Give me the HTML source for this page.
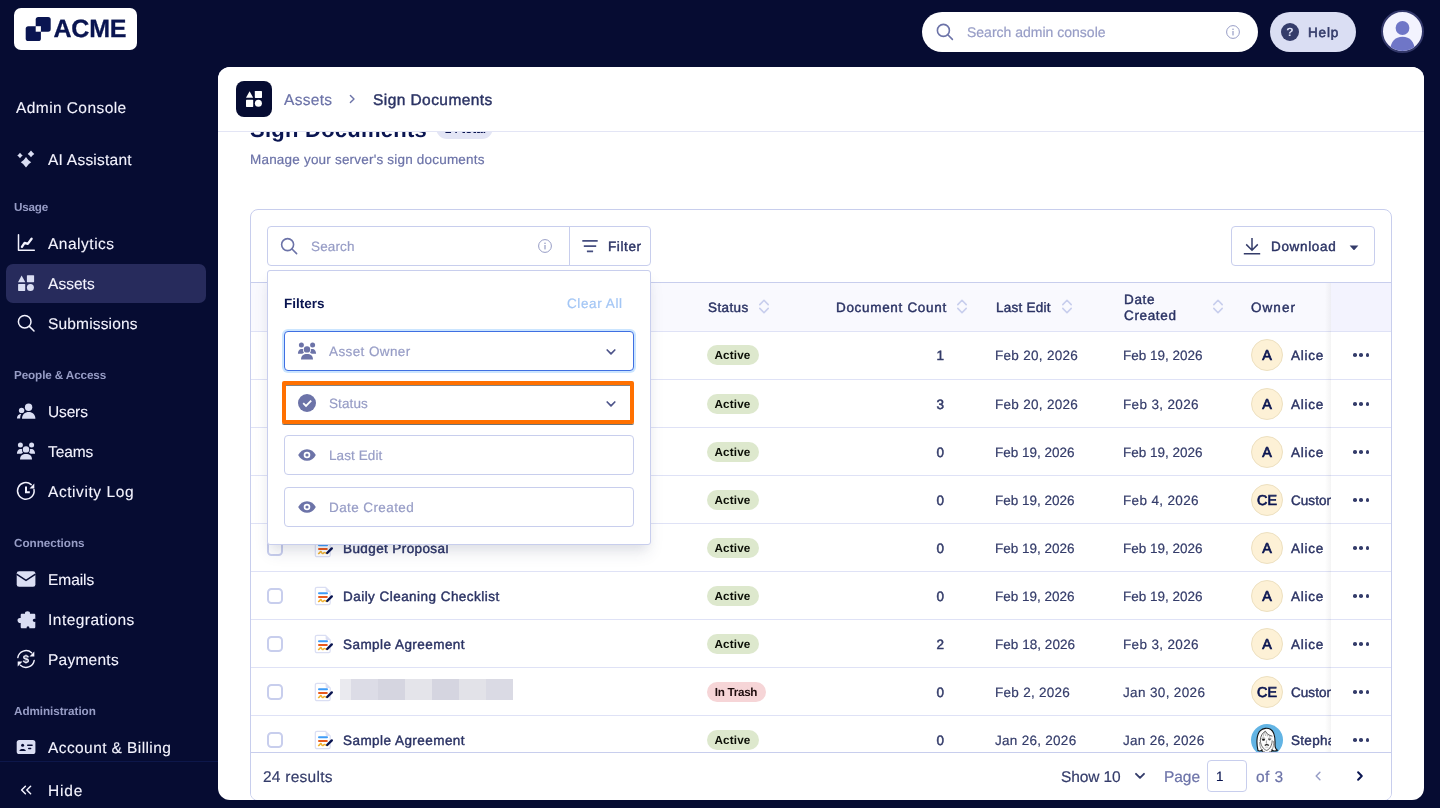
<!DOCTYPE html>
<html lang="en">
<head>
<meta charset="utf-8">
<title>Sign Documents - Admin Console</title>
<style>
*{box-sizing:border-box;margin:0;padding:0}
html,body{width:1440px;height:808px;overflow:hidden;background:#060c32}
body{font-family:"Liberation Sans",Arial,sans-serif;font-size:13.5px;color:#343c6a;position:relative;-webkit-font-smoothing:antialiased;text-rendering:geometricPrecision;-webkit-text-stroke:0.2px}
#root{position:absolute;left:0;top:0;width:1440px;height:808px;will-change:transform}
.abs{position:absolute}
.t{position:absolute;white-space:nowrap;line-height:20px}
b,.b{-webkit-text-stroke:0}
svg{display:block;position:absolute;overflow:visible}
/* sidebar */
#side{position:absolute;left:0;top:0;width:218px;height:808px}
.logo{position:absolute;left:14px;top:8px;width:123px;height:42px;background:#fff;border-radius:7px}
.nav{position:absolute;left:48px;font-size:15.5px;-webkit-text-stroke:0.1px;line-height:20px;color:#f3f3fe;white-space:nowrap}
.sec{position:absolute;left:14px;font-size:11.7px;line-height:16px;font-weight:700;-webkit-text-stroke:0;color:#979dc6;white-space:nowrap}
.ico{left:16px;width:20px;height:20px;fill:#dadef3}
.active{position:absolute;left:6px;top:264px;width:200px;height:39px;border-radius:7px;background:#272b5c}
/* header */
.hsearch{position:absolute;left:922px;top:12px;width:336px;height:40px;border-radius:20px;background:#fff}
.help{position:absolute;left:1270px;top:12px;width:86px;height:40px;border-radius:20px;background:#dadef3}
.avatar{position:absolute;left:1380.5px;top:10.3px;width:43px;height:43px;border-radius:50%;background:#f3f3fe;border:2px solid #33386a;overflow:hidden}
/* main */
#main{position:absolute;left:218px;top:67px;width:1206px;height:733px;background:#fff;border-radius:12px;overflow:hidden}
#main .in{position:absolute;left:-218px;top:-67px;width:1440px;height:808px}
.crumb{position:absolute;left:218px;top:67px;width:1206px;height:65px;background:#fff;border-bottom:1px solid #e3e5f5}
.card{position:absolute;left:250px;top:209px;width:1142px;height:592px;border:1px solid #c8ceed;border-radius:8px;background:#fff}
.box{position:absolute;border:1px solid #c8ceed;background:#fff}
.hl{position:absolute;left:251px;width:1140px;height:1px;background:#dfe2f6}
.cb{position:absolute;left:267px;width:16px;height:16px;border:2px solid #c8ceed;border-radius:4.5px;background:#fff}
.badge{position:absolute;left:707px;height:20px;border-radius:10px;background:#dde8cd;color:#0b0e06;font-size:11.7px;letter-spacing:0.15px;padding-right:1px;font-weight:700;-webkit-text-stroke:0;line-height:21px;text-align:center;white-space:nowrap}
.num{position:absolute;width:40px;left:904px;text-align:right;line-height:20px;font-size:13.5px;color:#343c6a;-webkit-text-stroke:0.5px #343c6a}
.own{position:absolute;left:1251px;width:32px;height:32px;border-radius:50%;background:#fdf1d6;border:1px solid #ede0c0;color:#0a1551;font-weight:400;-webkit-text-stroke:0.7px #0a1551;font-size:14.3px;line-height:33px;text-align:center;letter-spacing:0px}
.dots{position:absolute;left:1353px;width:17px;height:4px}
.dots i{position:absolute;top:0.2px;width:3.6px;height:3.6px;border-radius:50%;background:#343c6a}
.fld{position:absolute;left:284px;width:350px;height:40px;border:1px solid #c8ceed;border-radius:4px;background:#fff}
.ph{color:#979dc6}
.nm{font-weight:400;color:#2b3364;-webkit-text-stroke:0.42px #2b3364;letter-spacing:0.2px}
.dt{color:#343c6a}
.actsh{background:linear-gradient(to right,rgba(30,30,40,0),rgba(30,30,40,0.05))}
</style>
</head>
<body>
<div id="root">
<div id="side">
  <div class="logo">
    <svg style="left:0;top:0" width="123" height="42" viewBox="0 0 123 42">
      <rect x="21.7" y="8.9" width="15" height="14.8" rx="2.6" fill="#0a1551"/>
      <rect x="11.7" y="18.2" width="15.2" height="14.8" rx="2.6" fill="#0a1551"/>
      <rect x="21.7" y="18.2" width="5.2" height="5.5" fill="#fff"/>
    </svg>
    <div class="t" style="left:39.5px;top:7px;font-size:25px;line-height:28px;font-weight:700;-webkit-text-stroke:0.3px #0a1551;color:#0a1551;letter-spacing:-0.2px">ACME</div>
  </div>
  <div class="nav" style="left:16px;top:99px;letter-spacing:0.42px">Admin Console</div>

  <svg class="ico" style="top:149px" viewBox="0 0 20 20"><path d="M10.00 8.00 Q11.87 11.33 15.20 13.20 Q11.87 15.07 10.00 18.40 Q8.13 15.07 4.80 13.20 Q8.13 11.33 10.00 8.00Z"/><path d="M15.00 1.60 Q16.32 3.58 18.30 4.90 Q16.32 6.22 15.00 8.20 Q13.68 6.22 11.70 4.90 Q13.68 3.58 15.00 1.60Z"/><path d="M4.00 3.80 Q5.08 5.42 6.70 6.50 Q5.08 7.58 4.00 9.20 Q2.92 7.58 1.30 6.50 Q2.92 5.42 4.00 3.80Z"/></svg>
  <div class="nav" style="top:151px;letter-spacing:0.24px">AI Assistant</div>

  <div class="sec" style="top:200px;letter-spacing:-0.20px">Usage</div>

  <svg class="ico" style="top:233px" viewBox="0 0 20 20"><path d="M2.5 1.8V17.3H18.3" fill="none" stroke="#f3f3fe" stroke-width="1.5" stroke-linecap="round" stroke-linejoin="round"/><path d="M5.9 13.9 L8.6 9.8 L11.8 10.9 L15.6 5.7" fill="none" stroke="#f3f3fe" stroke-width="2.3" stroke-linecap="round" stroke-linejoin="round"/></svg>
  <div class="nav" style="top:235px;letter-spacing:0.51px">Analytics</div>

  <div class="active"></div>
  <svg class="ico" style="top:273px" viewBox="0 0 20 20"><path d="M5.65 2.4 L9.3 9.2 H2 Z"/><rect x="10.9" y="2.2" width="7.2" height="7" rx="0.6"/><rect x="2.1" y="10.9" width="7.1" height="7" rx="0.6"/><circle cx="14.4" cy="14.4" r="3.5"/></svg>
  <div class="nav" style="top:275px;letter-spacing:0.04px">Assets</div>

  <svg class="ico" style="top:313px" viewBox="0 0 20 20"><circle cx="8.7" cy="8.7" r="6.3" fill="none" stroke="#f3f3fe" stroke-width="1.5"/><path d="M13.4 13.4 L18 18" fill="none" stroke="#f3f3fe" stroke-width="1.5" stroke-linecap="round"/></svg>
  <div class="nav" style="top:315px;letter-spacing:0.17px">Submissions</div>

  <div class="sec" style="top:368px;letter-spacing:-0.11px">People &amp; Access</div>

  <svg class="ico" style="top:401px" viewBox="0 0 20 20"><circle cx="12.6" cy="6.3" r="3.7"/><path d="M6 17.8 C6 13.4 9 10.9 12.7 10.9 C16.4 10.9 19.4 13.4 19.4 17.8 Z"/><circle cx="5.6" cy="9.4" r="2.7"/><path d="M0.9 17.6 C0.9 15 2.6 13 5.4 12.7 C4.4 14 4.2 15.6 4.2 17.6 Z"/></svg>
  <div class="nav" style="top:403px;letter-spacing:-0.15px">Users</div>

  <svg class="ico" style="top:441px" viewBox="0 0 20 20"><circle cx="10" cy="8.4" r="3.2"/><path d="M4 18.4 C4 14.6 6.5 12.9 10 12.9 C13.5 12.9 16 14.6 16 18.4Z"/><circle cx="4.4" cy="3.9" r="2.5"/><circle cx="15.6" cy="3.9" r="2.5"/><path d="M0.9 12.7 C0.9 10 2.2 7.9 4.6 7.9 C5.2 7.9 5.7 8 6.1 8.3 C5.9 9.6 6.2 10.8 7 11.7 C6.3 12 5.7 12.3 5.2 12.7Z"/><path d="M19.1 12.7 C19.1 10 17.8 7.9 15.4 7.9 C14.8 7.9 14.3 8 13.9 8.3 C14.1 9.6 13.8 10.8 13 11.7 C13.7 12 14.3 12.3 14.8 12.7Z"/></svg>
  <div class="nav" style="top:443px;letter-spacing:-0.08px">Teams</div>

  <svg class="ico" style="top:481px" viewBox="0 0 20 20"><path d="M18 8.6 A8.3 8.3 0 1 1 15.2 3.6" fill="none" stroke="#f3f3fe" stroke-width="1.5" stroke-linecap="round"/><path d="M18.3 2.6 V7.4 H13.5 Z" fill="#f3f3fe"/><path d="M10 5.6 V11.2 H13.8" fill="none" stroke="#f3f3fe" stroke-width="2" stroke-linejoin="miter"/></svg>
  <div class="nav" style="top:483px;letter-spacing:0.57px">Activity Log</div>

  <div class="sec" style="top:536px;letter-spacing:-0.02px">Connections</div>

  <svg class="ico" style="top:569px" viewBox="0 0 20 20"><rect x="0.7" y="2.2" width="18.7" height="15.6" rx="2.4"/><path d="M0.5 5.2 L10 11.4 L19.5 5.2" fill="none" stroke="#060c32" stroke-width="1.5"/></svg>
  <div class="nav" style="top:571px;letter-spacing:-0.06px">Emails</div>

  <svg class="ico" style="top:609px" viewBox="0 0 20 20"><path d="M9 4.7 C8.4 1.5 14.6 1.5 14 4.7 H18 C18.8 4.7 19.3 5.2 19.3 6 V10 C16 9 16 13.8 19.3 12.8 V18 C19.3 18.8 18.8 19.3 18 19.3 H13.3 C14 16.6 10 16.6 10.7 19.3 H6 C5.2 19.3 4.7 18.8 4.7 18 V14 C1.2 14.8 -0.2 8.4 4.7 9 V6 C4.7 5.2 5.2 4.7 6 4.7 Z"/></svg>
  <div class="nav" style="top:611px;letter-spacing:0.48px">Integrations</div>

  <svg class="ico" style="top:649px" viewBox="0 0 20 20"><path d="M1.8 8.6 A8.3 8.3 0 0 1 15.6 3.8" fill="none" stroke="#f3f3fe" stroke-width="1.4" stroke-linecap="round"/><path d="M18.3 2.6 V7.4 H13.5 Z" fill="#f3f3fe"/><path d="M18.2 11.4 A8.3 8.3 0 0 1 4.4 16.2" fill="none" stroke="#f3f3fe" stroke-width="1.4" stroke-linecap="round"/><path d="M1.7 17.4 V12.6 H6.5 Z" fill="#f3f3fe"/><text x="10" y="14.2" text-anchor="middle" font-family="Liberation Sans, sans-serif" font-weight="700" font-size="11.5" fill="#f3f3fe">$</text></svg>
  <div class="nav" style="top:651px;letter-spacing:0.25px">Payments</div>

  <div class="sec" style="top:704px;letter-spacing:-0.05px">Administration</div>

  <svg class="ico" style="top:737px" viewBox="0 0 20 20"><rect x="0.7" y="2.9" width="18.7" height="14.2" rx="2.6"/><circle cx="6.6" cy="8.2" r="1.5" fill="#060c32"/><path d="M3.4 14 C3.6 11.4 9.6 11.4 9.8 14Z" fill="#060c32"/><rect x="11" y="7.6" width="5.8" height="1.4" rx="0.7" fill="#060c32"/><rect x="12" y="10.8" width="3.4" height="1.4" rx="0.7" fill="#060c32"/></svg>
  <div class="nav" style="top:739px;letter-spacing:0.41px">Account &amp; Billing</div>

  <div class="abs" style="left:0;top:761px;width:218px;height:1px;background:#0d174a"></div>
  <div class="abs" style="left:0;top:762px;width:218px;height:46px;background:#060c32"></div>
  <svg class="ico" style="top:780px" viewBox="0 0 20 20"><path d="M9.4 6.2 L5.6 10 L9.4 13.8 M14.6 6.2 L10.8 10 L14.6 13.8" fill="none" stroke="#f3f3fe" stroke-width="1.5" stroke-linecap="round" stroke-linejoin="round"/></svg>
  <div class="nav" style="top:782px;letter-spacing:0.85px">Hide</div>
</div>
<div class="hsearch">
  <svg style="left:14px;top:11px" width="18" height="18" viewBox="0 0 18 18"><circle cx="7.4" cy="7.4" r="6" fill="none" stroke="#6c73a8" stroke-width="1.6"/><path d="M11.8 11.8 L16.4 16.4" stroke="#6c73a8" stroke-width="1.6" stroke-linecap="round"/></svg>
  <div class="t ph" style="left:45px;top:10px;font-size:14px;letter-spacing:0px">Search admin console</div>
  <svg style="left:304px;top:13px" width="14" height="14" viewBox="0 0 14 14"><circle cx="7" cy="7" r="6.4" fill="none" stroke="#979dc6" stroke-width="1"/><rect x="6.4" y="6" width="1.2" height="4.4" fill="#979dc6"/><circle cx="7" cy="4.2" r="0.8" fill="#979dc6"/></svg>
</div>
<div class="help">
  <svg style="left:11px;top:11px" width="18" height="18" viewBox="0 0 18 18"><circle cx="9" cy="9" r="9" fill="#343c6a"/><text x="9" y="13.2" text-anchor="middle" font-family="Liberation Sans, sans-serif" font-weight="700" font-size="12" fill="#dadef3">?</text></svg>
  <div class="t" style="left:38px;top:11px;font-size:13.5px;color:#343c6a;-webkit-text-stroke:0.6px #343c6a;letter-spacing:0.85px">Help</div>
</div>
<div class="avatar">
  <svg style="left:0;top:0" width="39" height="39" viewBox="0 0 39 39"><circle cx="19.5" cy="16" r="6.9" fill="#6f76c7"/><path d="M7.2 39 C7.2 30 12 24.8 19.5 24.8 C27 24.8 31.8 30 31.8 39Z" fill="#6f76c7"/></svg>
</div>
<div id="main"><div class="in">
  <!-- page heading (scrolled under the breadcrumb bar) -->
  <div class="t" style="left:250px;top:116px;font-size:22px;line-height:28px;font-weight:700;-webkit-text-stroke:0;color:#0a1551;letter-spacing:0.25px">Sign Documents</div>
  <div class="abs" style="left:436px;top:117px;width:57px;height:22px;border-radius:11px;background:#e3e5f5"></div>
  <div class="t" style="left:445px;top:122px;font-size:11.7px;line-height:16px;font-weight:700;-webkit-text-stroke:0;color:#0a1551;letter-spacing:0px">24 total</div>
  <div class="t" style="left:250px;top:150px;color:#6c73a8;letter-spacing:0.2px">Manage your server's sign documents</div>

  <div class="card"></div>
  <!-- toolbar -->
  <div class="box" style="left:267px;top:226px;width:304px;height:40px;border-radius:4px 0 0 4px"></div>
  <svg style="left:280px;top:237px" width="18" height="18" viewBox="0 0 18 18"><circle cx="7.6" cy="7.6" r="6" fill="none" stroke="#6c73a8" stroke-width="1.6"/><path d="M12 12 L16.6 16.6" stroke="#6c73a8" stroke-width="1.6" stroke-linecap="round"/></svg>
  <div class="t ph" style="left:311px;top:237px;letter-spacing:0.15px">Search</div>
  <svg style="left:538px;top:239px" width="14" height="14" viewBox="0 0 14 14"><circle cx="7" cy="7" r="6.4" fill="none" stroke="#979dc6" stroke-width="1"/><rect x="6.4" y="6" width="1.2" height="4.4" fill="#979dc6"/><circle cx="7" cy="4.2" r="0.8" fill="#979dc6"/></svg>
  <div class="box" style="left:569px;top:226px;width:82px;height:40px;border-radius:0 4px 4px 0"></div>
  <svg style="left:582px;top:239px" width="16" height="14" viewBox="0 0 16 14"><path d="M0.3 1.8 H15.7 M1.8 7.1 H14.2 M4.9 12.3 H11.1" stroke="#454e80" stroke-width="1.8" stroke-linecap="butt"/></svg>
  <div class="t nm" style="left:608px;top:237px;letter-spacing:0.62px">Filter</div>
  <div class="box" style="left:1231px;top:226px;width:144px;height:40px;border-radius:4px"></div>
  <svg style="left:1243px;top:237px" width="18" height="18" viewBox="0 0 18 18"><path d="M9 1 V12.6 M3.2 7.4 L9 13.2 L14.8 7.4 M0.8 16.8 H17.2" fill="none" stroke="#343c6a" stroke-width="1.5" stroke-linejoin="miter"/></svg>
  <div class="t nm" style="left:1271px;top:237px;letter-spacing:0.66px">Download</div>
  <svg style="left:1349px;top:245px" width="10" height="6" viewBox="0 0 10 6"><path d="M0.6 0.4 H9.4 L5.6 4.8 C5.3 5.2 4.7 5.2 4.4 4.8 Z" fill="#343c6a"/></svg>

  <!-- table header -->
  <div class="abs" style="left:251px;top:282px;width:1140px;height:1px;background:#c8ceed"></div>
  <div class="abs" style="left:251px;top:283px;width:1140px;height:48px;background:#f9f9fe"></div>
  <div class="hl" style="top:331px"></div>
  <div class="t nm" style="left:708px;top:298px;letter-spacing:0.4px">Status</div>
  <div class="t nm" style="left:836px;top:298px;letter-spacing:0.68px">Document Count</div>
  <div class="t nm" style="left:996px;top:298px;letter-spacing:0.25px">Last Edit</div>
  <div class="t nm" style="left:1124px;top:292px;line-height:16px;letter-spacing:0.65px">Date<br>Created</div>
  <div class="t nm" style="left:1251px;top:298px;letter-spacing:1.05px">Owner</div>
  <svg style="left:759px;top:299px" width="10" height="15" viewBox="0 0 10 15"><path d="M0.8 5.6 L5 1.3 L9.2 5.6 M0.8 9.4 L5 13.7 L9.2 9.4" fill="none" stroke="#c8ceed" stroke-width="1.6" stroke-linecap="round" stroke-linejoin="round"/></svg><svg style="left:957px;top:299px" width="10" height="15" viewBox="0 0 10 15"><path d="M0.8 5.6 L5 1.3 L9.2 5.6 M0.8 9.4 L5 13.7 L9.2 9.4" fill="none" stroke="#c8ceed" stroke-width="1.6" stroke-linecap="round" stroke-linejoin="round"/></svg><svg style="left:1062px;top:299px" width="10" height="15" viewBox="0 0 10 15"><path d="M0.8 5.6 L5 1.3 L9.2 5.6 M0.8 9.4 L5 13.7 L9.2 9.4" fill="none" stroke="#c8ceed" stroke-width="1.6" stroke-linecap="round" stroke-linejoin="round"/></svg><svg style="left:1213px;top:299px" width="10" height="15" viewBox="0 0 10 15"><path d="M0.8 5.6 L5 1.3 L9.2 5.6 M0.8 9.4 L5 13.7 L9.2 9.4" fill="none" stroke="#c8ceed" stroke-width="1.6" stroke-linecap="round" stroke-linejoin="round"/></svg>
<div class="cb" style="top:347px"></div>
<svg style="left:314px;top:345px" width="20" height="20" viewBox="0 0 20 20"><path d="M3 1.3 H11.6 L16.2 5.9 V17 C16.2 18 15.5 18.7 14.5 18.7 H3 C2 18.7 1.3 18 1.3 17 V3 C1.3 2 2 1.3 3 1.3 Z" fill="#fff" stroke="#dadef3" stroke-width="1.2"/><path d="M11.6 1.3 V4.6 C11.6 5.4 12.1 5.9 12.9 5.9 H16.2 Z" fill="#dadef3"/><path d="M5 7.2 H13" stroke="#3e9cf7" stroke-width="2" stroke-linecap="round"/><path d="M5 10.9 H12.8" stroke="#e8591c" stroke-width="2" stroke-linecap="round"/><path d="M4.6 15.6 C5.6 15.4 6 13.6 6.8 13.6 C7.6 13.6 7.6 15.6 8.6 15.6 C9.5 15.6 9.6 14.4 10.4 14.4 C11.2 14.4 11.2 15.4 12.6 15.4" fill="none" stroke="#f0b233" stroke-width="1.5" stroke-linecap="round"/><path d="M13.2 15 L17.8 10.4" stroke="#0a1551" stroke-width="2.4" stroke-linecap="round"/></svg>
<div class="badge" style="top:345px;width:52px">Active</div>
<div class="num" style="top:346px">1</div>
<div class="t dt" style="left:995px;top:346px;letter-spacing:0.3px">Feb 20, 2026</div>
<div class="t dt" style="left:1123px;top:346px;letter-spacing:0.0px">Feb 19, 2026</div>
<div class="own" style="top:339px">A</div>
<div class="t nm" style="left:1291px;top:346px;letter-spacing:0.75px">Alice</div>
<div class="cb" style="top:396px"></div>
<svg style="left:314px;top:394px" width="20" height="20" viewBox="0 0 20 20"><path d="M3 1.3 H11.6 L16.2 5.9 V17 C16.2 18 15.5 18.7 14.5 18.7 H3 C2 18.7 1.3 18 1.3 17 V3 C1.3 2 2 1.3 3 1.3 Z" fill="#fff" stroke="#dadef3" stroke-width="1.2"/><path d="M11.6 1.3 V4.6 C11.6 5.4 12.1 5.9 12.9 5.9 H16.2 Z" fill="#dadef3"/><path d="M5 7.2 H13" stroke="#3e9cf7" stroke-width="2" stroke-linecap="round"/><path d="M5 10.9 H12.8" stroke="#e8591c" stroke-width="2" stroke-linecap="round"/><path d="M4.6 15.6 C5.6 15.4 6 13.6 6.8 13.6 C7.6 13.6 7.6 15.6 8.6 15.6 C9.5 15.6 9.6 14.4 10.4 14.4 C11.2 14.4 11.2 15.4 12.6 15.4" fill="none" stroke="#f0b233" stroke-width="1.5" stroke-linecap="round"/><path d="M13.2 15 L17.8 10.4" stroke="#0a1551" stroke-width="2.4" stroke-linecap="round"/></svg>
<div class="badge" style="top:394px;width:52px">Active</div>
<div class="num" style="top:395px">3</div>
<div class="t dt" style="left:995px;top:395px;letter-spacing:0.3px">Feb 20, 2026</div>
<div class="t dt" style="left:1123px;top:395px;letter-spacing:0.35px">Feb 3, 2026</div>
<div class="own" style="top:388px">A</div>
<div class="t nm" style="left:1291px;top:395px;letter-spacing:0.75px">Alice</div>
<div class="cb" style="top:444px"></div>
<svg style="left:314px;top:442px" width="20" height="20" viewBox="0 0 20 20"><path d="M3 1.3 H11.6 L16.2 5.9 V17 C16.2 18 15.5 18.7 14.5 18.7 H3 C2 18.7 1.3 18 1.3 17 V3 C1.3 2 2 1.3 3 1.3 Z" fill="#fff" stroke="#dadef3" stroke-width="1.2"/><path d="M11.6 1.3 V4.6 C11.6 5.4 12.1 5.9 12.9 5.9 H16.2 Z" fill="#dadef3"/><path d="M5 7.2 H13" stroke="#3e9cf7" stroke-width="2" stroke-linecap="round"/><path d="M5 10.9 H12.8" stroke="#e8591c" stroke-width="2" stroke-linecap="round"/><path d="M4.6 15.6 C5.6 15.4 6 13.6 6.8 13.6 C7.6 13.6 7.6 15.6 8.6 15.6 C9.5 15.6 9.6 14.4 10.4 14.4 C11.2 14.4 11.2 15.4 12.6 15.4" fill="none" stroke="#f0b233" stroke-width="1.5" stroke-linecap="round"/><path d="M13.2 15 L17.8 10.4" stroke="#0a1551" stroke-width="2.4" stroke-linecap="round"/></svg>
<div class="badge" style="top:442px;width:52px">Active</div>
<div class="num" style="top:443px">0</div>
<div class="t dt" style="left:995px;top:443px;letter-spacing:0.0px">Feb 19, 2026</div>
<div class="t dt" style="left:1123px;top:443px;letter-spacing:0.0px">Feb 19, 2026</div>
<div class="own" style="top:436px">A</div>
<div class="t nm" style="left:1291px;top:443px;letter-spacing:0.75px">Alice</div>
<div class="cb" style="top:492px"></div>
<svg style="left:314px;top:490px" width="20" height="20" viewBox="0 0 20 20"><path d="M3 1.3 H11.6 L16.2 5.9 V17 C16.2 18 15.5 18.7 14.5 18.7 H3 C2 18.7 1.3 18 1.3 17 V3 C1.3 2 2 1.3 3 1.3 Z" fill="#fff" stroke="#dadef3" stroke-width="1.2"/><path d="M11.6 1.3 V4.6 C11.6 5.4 12.1 5.9 12.9 5.9 H16.2 Z" fill="#dadef3"/><path d="M5 7.2 H13" stroke="#3e9cf7" stroke-width="2" stroke-linecap="round"/><path d="M5 10.9 H12.8" stroke="#e8591c" stroke-width="2" stroke-linecap="round"/><path d="M4.6 15.6 C5.6 15.4 6 13.6 6.8 13.6 C7.6 13.6 7.6 15.6 8.6 15.6 C9.5 15.6 9.6 14.4 10.4 14.4 C11.2 14.4 11.2 15.4 12.6 15.4" fill="none" stroke="#f0b233" stroke-width="1.5" stroke-linecap="round"/><path d="M13.2 15 L17.8 10.4" stroke="#0a1551" stroke-width="2.4" stroke-linecap="round"/></svg>
<div class="badge" style="top:490px;width:52px">Active</div>
<div class="num" style="top:491px">0</div>
<div class="t dt" style="left:995px;top:491px;letter-spacing:0.0px">Feb 19, 2026</div>
<div class="t dt" style="left:1123px;top:491px;letter-spacing:0.35px">Feb 4, 2026</div>
<div class="own" style="top:484px">CE</div>
<div class="t nm" style="left:1291px;top:491px;letter-spacing:0.05px">Customer</div>
<div class="cb" style="top:540px"></div>
<svg style="left:314px;top:538px" width="20" height="20" viewBox="0 0 20 20"><path d="M3 1.3 H11.6 L16.2 5.9 V17 C16.2 18 15.5 18.7 14.5 18.7 H3 C2 18.7 1.3 18 1.3 17 V3 C1.3 2 2 1.3 3 1.3 Z" fill="#fff" stroke="#dadef3" stroke-width="1.2"/><path d="M11.6 1.3 V4.6 C11.6 5.4 12.1 5.9 12.9 5.9 H16.2 Z" fill="#dadef3"/><path d="M5 7.2 H13" stroke="#3e9cf7" stroke-width="2" stroke-linecap="round"/><path d="M5 10.9 H12.8" stroke="#e8591c" stroke-width="2" stroke-linecap="round"/><path d="M4.6 15.6 C5.6 15.4 6 13.6 6.8 13.6 C7.6 13.6 7.6 15.6 8.6 15.6 C9.5 15.6 9.6 14.4 10.4 14.4 C11.2 14.4 11.2 15.4 12.6 15.4" fill="none" stroke="#f0b233" stroke-width="1.5" stroke-linecap="round"/><path d="M13.2 15 L17.8 10.4" stroke="#0a1551" stroke-width="2.4" stroke-linecap="round"/></svg>
<div class="t nm" style="left:343px;top:539px;letter-spacing:0.4px">Budget Proposal</div>
<div class="badge" style="top:538px;width:52px">Active</div>
<div class="num" style="top:539px">0</div>
<div class="t dt" style="left:995px;top:539px;letter-spacing:0.0px">Feb 19, 2026</div>
<div class="t dt" style="left:1123px;top:539px;letter-spacing:0.0px">Feb 19, 2026</div>
<div class="own" style="top:532px">A</div>
<div class="t nm" style="left:1291px;top:539px;letter-spacing:0.75px">Alice</div>
<div class="cb" style="top:588px"></div>
<svg style="left:314px;top:586px" width="20" height="20" viewBox="0 0 20 20"><path d="M3 1.3 H11.6 L16.2 5.9 V17 C16.2 18 15.5 18.7 14.5 18.7 H3 C2 18.7 1.3 18 1.3 17 V3 C1.3 2 2 1.3 3 1.3 Z" fill="#fff" stroke="#dadef3" stroke-width="1.2"/><path d="M11.6 1.3 V4.6 C11.6 5.4 12.1 5.9 12.9 5.9 H16.2 Z" fill="#dadef3"/><path d="M5 7.2 H13" stroke="#3e9cf7" stroke-width="2" stroke-linecap="round"/><path d="M5 10.9 H12.8" stroke="#e8591c" stroke-width="2" stroke-linecap="round"/><path d="M4.6 15.6 C5.6 15.4 6 13.6 6.8 13.6 C7.6 13.6 7.6 15.6 8.6 15.6 C9.5 15.6 9.6 14.4 10.4 14.4 C11.2 14.4 11.2 15.4 12.6 15.4" fill="none" stroke="#f0b233" stroke-width="1.5" stroke-linecap="round"/><path d="M13.2 15 L17.8 10.4" stroke="#0a1551" stroke-width="2.4" stroke-linecap="round"/></svg>
<div class="t nm" style="left:343px;top:587px;letter-spacing:0.46px">Daily Cleaning Checklist</div>
<div class="badge" style="top:586px;width:52px">Active</div>
<div class="num" style="top:587px">0</div>
<div class="t dt" style="left:995px;top:587px;letter-spacing:0.0px">Feb 19, 2026</div>
<div class="t dt" style="left:1123px;top:587px;letter-spacing:0.0px">Feb 19, 2026</div>
<div class="own" style="top:580px">A</div>
<div class="t nm" style="left:1291px;top:587px;letter-spacing:0.75px">Alice</div>
<div class="cb" style="top:636px"></div>
<svg style="left:314px;top:634px" width="20" height="20" viewBox="0 0 20 20"><path d="M3 1.3 H11.6 L16.2 5.9 V17 C16.2 18 15.5 18.7 14.5 18.7 H3 C2 18.7 1.3 18 1.3 17 V3 C1.3 2 2 1.3 3 1.3 Z" fill="#fff" stroke="#dadef3" stroke-width="1.2"/><path d="M11.6 1.3 V4.6 C11.6 5.4 12.1 5.9 12.9 5.9 H16.2 Z" fill="#dadef3"/><path d="M5 7.2 H13" stroke="#3e9cf7" stroke-width="2" stroke-linecap="round"/><path d="M5 10.9 H12.8" stroke="#e8591c" stroke-width="2" stroke-linecap="round"/><path d="M4.6 15.6 C5.6 15.4 6 13.6 6.8 13.6 C7.6 13.6 7.6 15.6 8.6 15.6 C9.5 15.6 9.6 14.4 10.4 14.4 C11.2 14.4 11.2 15.4 12.6 15.4" fill="none" stroke="#f0b233" stroke-width="1.5" stroke-linecap="round"/><path d="M13.2 15 L17.8 10.4" stroke="#0a1551" stroke-width="2.4" stroke-linecap="round"/></svg>
<div class="t nm" style="left:343px;top:635px;letter-spacing:0.45px">Sample Agreement</div>
<div class="badge" style="top:634px;width:52px">Active</div>
<div class="num" style="top:635px">2</div>
<div class="t dt" style="left:995px;top:635px;letter-spacing:0.04px">Feb 18, 2026</div>
<div class="t dt" style="left:1123px;top:635px;letter-spacing:0.35px">Feb 3, 2026</div>
<div class="own" style="top:628px">A</div>
<div class="t nm" style="left:1291px;top:635px;letter-spacing:0.75px">Alice</div>
<div class="cb" style="top:684px"></div>
<svg style="left:314px;top:682px" width="20" height="20" viewBox="0 0 20 20"><path d="M3 1.3 H11.6 L16.2 5.9 V17 C16.2 18 15.5 18.7 14.5 18.7 H3 C2 18.7 1.3 18 1.3 17 V3 C1.3 2 2 1.3 3 1.3 Z" fill="#fff" stroke="#dadef3" stroke-width="1.2"/><path d="M11.6 1.3 V4.6 C11.6 5.4 12.1 5.9 12.9 5.9 H16.2 Z" fill="#dadef3"/><path d="M5 7.2 H13" stroke="#3e9cf7" stroke-width="2" stroke-linecap="round"/><path d="M5 10.9 H12.8" stroke="#e8591c" stroke-width="2" stroke-linecap="round"/><path d="M4.6 15.6 C5.6 15.4 6 13.6 6.8 13.6 C7.6 13.6 7.6 15.6 8.6 15.6 C9.5 15.6 9.6 14.4 10.4 14.4 C11.2 14.4 11.2 15.4 12.6 15.4" fill="none" stroke="#f0b233" stroke-width="1.5" stroke-linecap="round"/><path d="M13.2 15 L17.8 10.4" stroke="#0a1551" stroke-width="2.4" stroke-linecap="round"/></svg>
<div class="abs" style="left:340.3px;top:679px;width:10.7px;height:21px;background:#eaeaef"></div>
<div class="abs" style="left:351px;top:679px;width:27px;height:21px;background:#dcdce6"></div>
<div class="abs" style="left:378px;top:679px;width:27px;height:21px;background:#d5d5e0"></div>
<div class="abs" style="left:405px;top:679px;width:27px;height:21px;background:#e4e4ea"></div>
<div class="abs" style="left:432px;top:679px;width:27px;height:21px;background:#d5d5e0"></div>
<div class="abs" style="left:459px;top:679px;width:27px;height:21px;background:#e2e2e8"></div>
<div class="abs" style="left:486px;top:679px;width:27px;height:21px;background:#dadae4"></div>
<div class="badge" style="top:682px;width:59px;background:#f6d5d7;color:#1f0d0e;letter-spacing:-0.3px">In Trash</div>
<div class="num" style="top:683px">0</div>
<div class="t dt" style="left:995px;top:683px;letter-spacing:0.28px">Feb 2, 2026</div>
<div class="t dt" style="left:1123px;top:683px;letter-spacing:0.35px">Jan 30, 2026</div>
<div class="own" style="top:676px">CE</div>
<div class="t nm" style="left:1291px;top:683px;letter-spacing:0.05px">Customer</div>
<div class="cb" style="top:732px"></div>
<svg style="left:314px;top:730px" width="20" height="20" viewBox="0 0 20 20"><path d="M3 1.3 H11.6 L16.2 5.9 V17 C16.2 18 15.5 18.7 14.5 18.7 H3 C2 18.7 1.3 18 1.3 17 V3 C1.3 2 2 1.3 3 1.3 Z" fill="#fff" stroke="#dadef3" stroke-width="1.2"/><path d="M11.6 1.3 V4.6 C11.6 5.4 12.1 5.9 12.9 5.9 H16.2 Z" fill="#dadef3"/><path d="M5 7.2 H13" stroke="#3e9cf7" stroke-width="2" stroke-linecap="round"/><path d="M5 10.9 H12.8" stroke="#e8591c" stroke-width="2" stroke-linecap="round"/><path d="M4.6 15.6 C5.6 15.4 6 13.6 6.8 13.6 C7.6 13.6 7.6 15.6 8.6 15.6 C9.5 15.6 9.6 14.4 10.4 14.4 C11.2 14.4 11.2 15.4 12.6 15.4" fill="none" stroke="#f0b233" stroke-width="1.5" stroke-linecap="round"/><path d="M13.2 15 L17.8 10.4" stroke="#0a1551" stroke-width="2.4" stroke-linecap="round"/></svg>
<div class="t nm" style="left:343px;top:731px;letter-spacing:0.45px">Sample Agreement</div>
<div class="badge" style="top:730px;width:52px">Active</div>
<div class="num" style="top:731px">0</div>
<div class="t dt" style="left:995px;top:731px;letter-spacing:0.28px">Jan 26, 2026</div>
<div class="t dt" style="left:1123px;top:731px;letter-spacing:0.28px">Jan 26, 2026</div>
<svg style="left:1251px;top:724px" width="32" height="32" viewBox="0 0 32 32"><circle cx="16" cy="16" r="16" fill="#62b4e4"/><path d="M7 26.6 C5.4 20 5.2 10.4 9.4 6.6 C12 4.2 16.4 3.6 19.4 5.2 C23.8 7.6 24.2 15 24 20 C23.9 23 24.6 25.2 26.4 26.2 C24.4 27.4 22.2 27 21 26 L20.2 31 H11.8 L11 26 C9.6 27.2 8.2 27.2 7 26.6Z" fill="#fcfcfc" stroke="#111" stroke-width="1.1"/><path d="M9.2 17 C9.4 12 11.6 8.6 14.4 7.2 C15.4 9.6 18.2 11.6 21.4 12.2" fill="none" stroke="#333" stroke-width="0.8"/><path d="M14.4 7.2 C13 9.4 12.4 11 12.2 12.6 M15.4 8.6 C14.8 10 14.6 11 14.6 12 M17 10.4 L16.4 12.4 M19 11.6 L18.6 13.2" fill="none" stroke="#666" stroke-width="0.5"/><path d="M9.4 17 C9.8 21.6 12.4 25.4 15.6 26.4 C18.8 25.4 21 21.4 21.2 16.4" fill="none" stroke="#333" stroke-width="0.7"/><path d="M8.6 18 C8.6 21 9.4 24 11 26 M22.6 17 C22.8 20 22.4 23.6 21 26" fill="none" stroke="#555" stroke-width="0.6"/><ellipse cx="12.5" cy="15.7" rx="1.5" ry="1" fill="#111"/><path d="M10.6 14.6 C11.6 13.8 13.2 13.8 14.2 14.6" stroke="#333" stroke-width="0.6" fill="none"/><ellipse cx="18.5" cy="15.6" rx="1.4" ry="0.8" fill="#555"/><path d="M17 14.6 C18 14 19.4 14 20.4 14.8" stroke="#444" stroke-width="0.6" fill="none"/><path d="M15.6 16.4 L15.2 19.2 L16.2 19.4" stroke="#666" stroke-width="0.6" fill="none"/><path d="M13.8 21.4 C14.8 20.6 16.8 20.6 17.8 21.4" stroke="#222" stroke-width="1.3" fill="none"/><path d="M14.4 23.2 H17.2" stroke="#888" stroke-width="0.5"/><path d="M13 27 L12.6 31 M19 27 L19.4 31" stroke="#222" stroke-width="0.8"/></svg>
<div class="t nm" style="left:1291px;top:731px;letter-spacing:0.3px">Stephanie</div>
<div class="hl" style="top:379px"></div>
<div class="hl" style="top:427px"></div>
<div class="hl" style="top:475px"></div>
<div class="hl" style="top:523px"></div>
<div class="hl" style="top:571px"></div>
<div class="hl" style="top:619px"></div>
<div class="hl" style="top:667px"></div>
<div class="hl" style="top:715px"></div>
<div class="abs actsh" style="left:1325px;top:283px;width:6px;height:469px"></div>
<div class="abs" style="left:1331px;top:283px;width:60px;height:48px;background:#f3f3fe"></div>
<div class="abs" style="left:1331px;top:332px;width:60px;height:420px;background:#fff"></div>
<div class="abs" style="left:1331px;top:379px;width:60px;height:1px;background:#dfe2f6"></div>
<div class="abs" style="left:1331px;top:427px;width:60px;height:1px;background:#dfe2f6"></div>
<div class="abs" style="left:1331px;top:475px;width:60px;height:1px;background:#dfe2f6"></div>
<div class="abs" style="left:1331px;top:523px;width:60px;height:1px;background:#dfe2f6"></div>
<div class="abs" style="left:1331px;top:571px;width:60px;height:1px;background:#dfe2f6"></div>
<div class="abs" style="left:1331px;top:619px;width:60px;height:1px;background:#dfe2f6"></div>
<div class="abs" style="left:1331px;top:667px;width:60px;height:1px;background:#dfe2f6"></div>
<div class="abs" style="left:1331px;top:715px;width:60px;height:1px;background:#dfe2f6"></div>
<div class="dots" style="top:353px"><i style="left:0"></i><i style="left:6.45px"></i><i style="left:12.9px"></i></div>
<div class="dots" style="top:402px"><i style="left:0"></i><i style="left:6.45px"></i><i style="left:12.9px"></i></div>
<div class="dots" style="top:450px"><i style="left:0"></i><i style="left:6.45px"></i><i style="left:12.9px"></i></div>
<div class="dots" style="top:498px"><i style="left:0"></i><i style="left:6.45px"></i><i style="left:12.9px"></i></div>
<div class="dots" style="top:546px"><i style="left:0"></i><i style="left:6.45px"></i><i style="left:12.9px"></i></div>
<div class="dots" style="top:594px"><i style="left:0"></i><i style="left:6.45px"></i><i style="left:12.9px"></i></div>
<div class="dots" style="top:642px"><i style="left:0"></i><i style="left:6.45px"></i><i style="left:12.9px"></i></div>
<div class="dots" style="top:690px"><i style="left:0"></i><i style="left:6.45px"></i><i style="left:12.9px"></i></div>
<div class="dots" style="top:738px"><i style="left:0"></i><i style="left:6.45px"></i><i style="left:12.9px"></i></div>
  <!-- footer -->
  <div class="abs" style="left:251px;top:752px;width:1140px;height:48px;background:#fff;border-top:1px solid #c8ceed;border-radius:0 0 7px 7px"></div>
  <div class="t" style="left:263px;top:768px;font-size:15.5px;letter-spacing:0.25px">24 results</div>
  <div class="t" style="left:1061px;top:768px;font-size:15.5px;letter-spacing:-0.12px">Show 10</div>
  <svg style="left:1134px;top:771px" width="12" height="10" viewBox="0 0 12 10"><path d="M2 2.8 L6 6.8 L10 2.8" fill="none" stroke="#343c6a" stroke-width="1.9" stroke-linecap="round" stroke-linejoin="round"/></svg>
  <div class="t" style="left:1164px;top:768px;font-size:15.5px;color:#6c73a8;letter-spacing:-0.05px">Page</div>
  <div class="box" style="left:1207px;top:760px;width:40px;height:32px;border-radius:4px"></div>
  <div class="t" style="left:1216px;top:767px;font-size:13.5px;color:#0a1551">1</div>
  <div class="t" style="left:1256px;top:768px;font-size:15.5px;color:#6c73a8;letter-spacing:0.4px">of 3</div>
  <svg style="left:1313px;top:770px" width="10" height="12" viewBox="0 0 10 12"><path d="M6.9 2.3 L3.2 6 L6.9 9.7" fill="none" stroke="#979dc6" stroke-width="1.5" stroke-linecap="round" stroke-linejoin="round"/></svg>
  <svg style="left:1355px;top:770px" width="10" height="12" viewBox="0 0 10 12"><path d="M3.1 2.3 L6.8 6 L3.1 9.7" fill="none" stroke="#0a1551" stroke-width="2" stroke-linecap="round" stroke-linejoin="round"/></svg>

  <!-- filter dropdown -->
  <div class="abs" style="left:267px;top:270px;width:384px;height:275px;background:#fff;border:1px solid #c8ceed;border-radius:3px;box-shadow:0 10px 16px -2px rgba(37,45,91,0.10),0 6px 10px -4px rgba(37,45,91,0.08)"></div>
  <div class="t" style="left:284px;top:294px;font-weight:700;-webkit-text-stroke:0;color:#0a1551;letter-spacing:0px">Filters</div>
  <div class="t" style="left:567px;top:294px;color:#a3c6f5;letter-spacing:0.6px">Clear All</div>

  <div class="fld" style="top:331px;border-color:#3f6fe2;box-shadow:0 0 0 2px #cbe5ff"></div>
  <svg style="left:297px;top:341px" width="20" height="20" viewBox="0 0 20 20" fill="#6c73a8"><circle cx="10" cy="8.4" r="3.2"/><path d="M4 18.4 C4 14.6 6.5 12.9 10 12.9 C13.5 12.9 16 14.6 16 18.4Z"/><circle cx="4.4" cy="3.9" r="2.5"/><circle cx="15.6" cy="3.9" r="2.5"/><path d="M0.9 12.7 C0.9 10 2.2 7.9 4.6 7.9 C5.2 7.9 5.7 8 6.1 8.3 C5.9 9.6 6.2 10.8 7 11.7 C6.3 12 5.7 12.3 5.2 12.7Z"/><path d="M19.1 12.7 C19.1 10 17.8 7.9 15.4 7.9 C14.8 7.9 14.3 8 13.9 8.3 C14.1 9.6 13.8 10.8 13 11.7 C13.7 12 14.3 12.3 14.8 12.7Z"/></svg>
  <div class="t ph" style="left:329px;top:342px;letter-spacing:0.4px">Asset Owner</div>
  <svg style="left:606px;top:348px" width="10" height="8" viewBox="0 0 10 8"><path d="M1.2 2 L5 5.8 L8.8 2" fill="none" stroke="#4d548a" stroke-width="1.7" stroke-linecap="round" stroke-linejoin="round"/></svg>

  <div class="fld" style="top:383px"></div>
  <div class="abs" style="left:282px;top:381px;width:352px;height:43px;border:4px solid #ff7000;border-radius:2px;box-shadow:0 1px 0 rgba(80,80,80,0.8), inset 0 1px 0 rgba(80,80,80,0.7)"></div>
  <svg style="left:298px;top:394px" width="18" height="18" viewBox="0 0 18 18"><circle cx="9" cy="9" r="9" fill="#6c73a8"/><path d="M5.2 9.2 L8 11.9 L13.2 6.6" fill="none" stroke="#fff" stroke-width="1.8"/></svg>
  <div class="t ph" style="left:329px;top:394px;letter-spacing:0.1px">Status</div>
  <svg style="left:606px;top:400px" width="10" height="8" viewBox="0 0 10 8"><path d="M1.2 2 L5 5.8 L8.8 2" fill="none" stroke="#4d548a" stroke-width="1.7" stroke-linecap="round" stroke-linejoin="round"/></svg>

  <div class="fld" style="top:435px"></div>
  <svg style="left:298px;top:446px" width="18" height="18" viewBox="0 0 18 18"><path d="M0.2 9 C2 5.4 5.2 3.2 9 3.2 C12.8 3.2 16 5.4 17.8 9 C16 12.6 12.8 14.8 9 14.8 C5.2 14.8 2 12.6 0.2 9Z" fill="#6c73a8"/><circle cx="9" cy="9" r="3.3" fill="#fff"/><circle cx="9" cy="9" r="1.6" fill="#6c73a8"/></svg>
  <div class="t ph" style="left:329px;top:446px;letter-spacing:0.1px">Last Edit</div>

  <div class="fld" style="top:487px"></div>
  <svg style="left:298px;top:498px" width="18" height="18" viewBox="0 0 18 18"><path d="M0.2 9 C2 5.4 5.2 3.2 9 3.2 C12.8 3.2 16 5.4 17.8 9 C16 12.6 12.8 14.8 9 14.8 C5.2 14.8 2 12.6 0.2 9Z" fill="#6c73a8"/><circle cx="9" cy="9" r="3.3" fill="#fff"/><circle cx="9" cy="9" r="1.6" fill="#6c73a8"/></svg>
  <div class="t ph" style="left:329px;top:498px;letter-spacing:0.4px">Date Created</div>
</div></div>

<div class="crumb" style="border-radius:12px 12px 0 0"></div>
<div class="abs" style="left:236px;top:81px;width:36px;height:36px;border-radius:8px;background:#060c32"></div>
<svg style="left:246px;top:91px" width="16" height="16" viewBox="0 0 16 16" fill="#fff"><path d="M3.6 0.3 L7.2 6.8 H0 Z"/><rect x="8.8" y="0" width="7.2" height="6.9" rx="0.6"/><rect x="0" y="8.8" width="7.2" height="7.1" rx="0.6"/><circle cx="12.4" cy="12.3" r="3.5"/></svg>
<div class="t" style="left:284px;top:91px;font-size:15.5px;color:#6c73a8;letter-spacing:0.3px">Assets</div>
<svg style="left:348px;top:93px" width="8" height="12" viewBox="0 0 8 12"><path d="M2.4 2.4 L6 6 L2.4 9.6" fill="none" stroke="#6c73a8" stroke-width="1.4" stroke-linecap="round" stroke-linejoin="round"/></svg>
<div class="t nm" style="left:373px;top:91px;font-size:15.5px;letter-spacing:0.43px">Sign Documents</div>
</div>
</body>
</html>
